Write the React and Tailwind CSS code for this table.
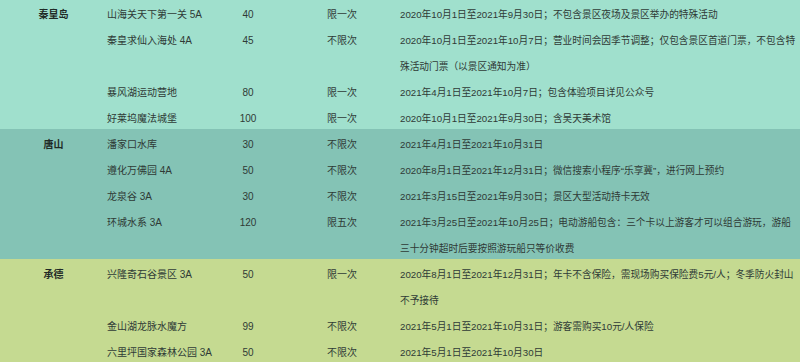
import React from 'react';

const sections = [
  {
    city: '秦皇岛',
    bg: 'bg-[#a0e0cd]',
    pad: 'pt-[2px]',
    rows: [
      { name: '山海关天下第一关 5A', price: '40', limit: '限一次', notes: ['2020年10月1日至2021年9月30日；不包含景区夜场及景区举办的特殊活动'] },
      {
        name: '秦皇求仙入海处 4A',
        price: '45',
        limit: '不限次',
        notes: ['2020年10月1日至2021年10月7日；营业时间会因季节调整；仅包含景区首道门票，不包含特', '殊活动门票（以景区通知为准）'],
      },
      { name: '暴风湖运动营地', price: '80', limit: '限一次', notes: ['2021年4月1日至2021年10月7日；包含体验项目详见公众号'] },
      { name: '好莱坞魔法城堡', price: '100', limit: '限一次', notes: ['2020年10月1日至2021年9月30日；含吴天美术馆'] },
    ],
  },
  {
    city: '唐山',
    bg: 'bg-[#84c3b5]',
    pad: 'pt-[3px]',
    rows: [
      { name: '潘家口水库', price: '30', limit: '不限次', notes: ['2021年4月1日至2021年10月31日'] },
      { name: '遵化万佛园 4A', price: '50', limit: '不限次', notes: ['2020年8月1日至2021年12月31日；微信搜索小程序“乐享冀”，进行网上预约'] },
      { name: '龙泉谷 3A', price: '30', limit: '不限次', notes: ['2021年3月15日至2021年9月30日；景区大型活动持卡无效'] },
      {
        name: '环城水系 3A',
        price: '120',
        limit: '限五次',
        notes: ['2021年3月25日至2021年10月25日；电动游船包含：三个卡以上游客才可以组合游玩，游船', '三十分钟超时后要按照游玩船只等价收费'],
      },
    ],
  },
  {
    city: '承德',
    bg: 'bg-[#c5da91]',
    pad: 'pt-[3px]',
    rows: [
      {
        name: '兴隆奇石谷景区 3A',
        price: '50',
        limit: '限一次',
        notes: ['2020年8月1日至2021年12月31日；年卡不含保险，需现场购买保险费5元/人；冬季防火封山', '不予接待'],
      },
      { name: '金山湖龙脉水魔方', price: '99', limit: '不限次', notes: ['2021年5月1日至2021年10月31日；游客需购买10元/人保险'] },
      { name: '六里坪国家森林公园 3A', price: '50', limit: '不限次', notes: ['2021年5月1日至2021年10月30日'] },
    ],
  },
];

function Row({ city, row }) {
  return (
    <div className="grid grid-cols-[107px_93px_96px_92px_1fr]">
      <div className="text-center font-bold text-[#1f2a26]">{city}</div>
      <div className="whitespace-nowrap">{row.name}</div>
      <div className="text-center">{row.price}</div>
      <div className="text-center">{row.limit}</div>
      <div className="pl-[12px] text-[9.7px] overflow-hidden">
        {row.notes.map((line, i) => (
          <div key={i} className="whitespace-nowrap">{line}</div>
        ))}
      </div>
    </div>
  );
}

export default function App() {
  return (
    <div
      className="w-[800px] h-[362px] overflow-hidden bg-[#c5da91] text-[10px] leading-[26px] text-[#2f3a36]"
      style={{ fontFamily: '"Liberation Sans", "Noto Sans CJK SC", sans-serif' }}
    >
      {sections.map(section => (
        <div key={section.city} className={`${section.bg} ${section.pad} -mb-[3px] relative`}>
          {section.rows.map((row, i) => (
            <Row key={row.name} city={i === 0 ? section.city : ''} row={row} />
          ))}
        </div>
      ))}
    </div>
  );
}
